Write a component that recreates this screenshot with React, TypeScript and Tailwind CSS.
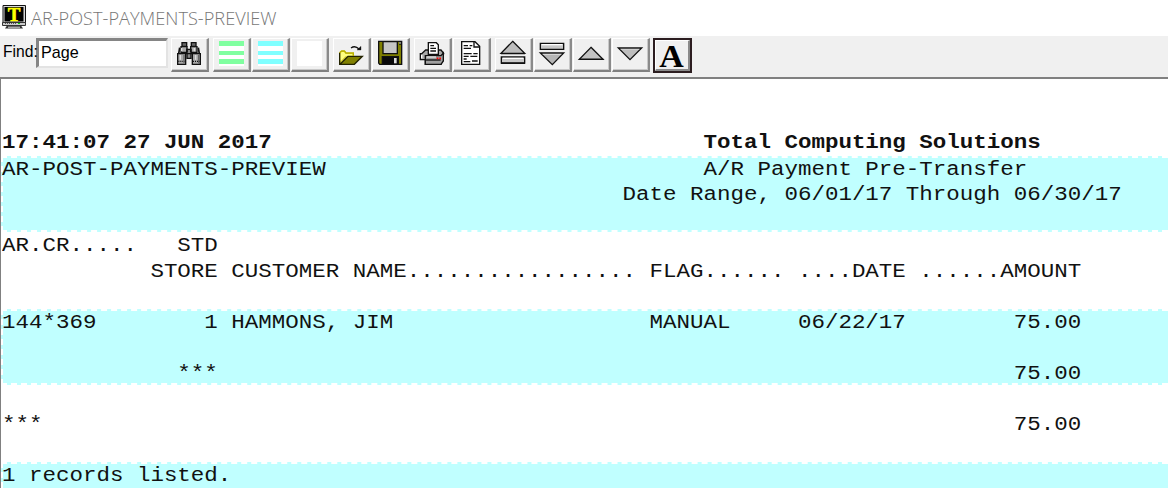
import type { ReactNode } from "react";

function ToolButton({ children, className = "" }: { children?: ReactNode; className?: string }) {
  return (
    <div
      className={`h-[34px] w-[38px] shrink-0 border-t border-l border-r-2 border-b-2 border-t-white border-l-white border-r-[#8a8a8a] border-b-[#808080] bg-[#f0f0f0] shadow-[inset_-1px_-1px_0_#c8c8c8] ${className}`}
    >
      {children}
    </div>
  );
}

/* Icons are drawn on a grid of three units per pixel. */
function Icon({ x, children }: { x: number; children: ReactNode }) {
  return (
    <svg
      className="-mt-px -ml-px block h-[34px] w-[38px]"
      viewBox={`${x} 18 114 102`}
      stroke="#111"
      strokeWidth="4"
      fill="none"
    >
      {children}
    </svg>
  );
}

function Stripes({ color }: { color: string }) {
  return (
    <div className="mt-[2px] ml-[5px] flex h-[25px] w-[25px] flex-col justify-between bg-white pb-[2px]">
      <div className={`h-[5px] ${color}`} />
      <div className={`h-[4px] ${color}`} />
      <div className={`h-[5px] ${color}`} />
    </div>
  );
}

function Toolbar() {
  return (
    <div className="flex h-[41px] items-start bg-[#f0f0f0] pt-[2px] pl-[3px]">
      <div className="mt-[4px] w-[33px] font-['Liberation_Sans'] text-[17px] leading-[20px] whitespace-nowrap text-black">
        <span className="inline-block origin-left scale-x-[0.92]">Find:</span>
      </div>
      <div className="h-[30px] w-[132px] border-t-[3px] border-r-2 border-b-2 border-l-[3px] border-t-[#858585] border-r-[#e3e3e3] border-b-[#e3e3e3] border-l-[#858585] bg-white pl-[2px] font-['Liberation_Sans'] text-[17px] leading-[24px] text-black">
        <span className="inline-block origin-left scale-x-[0.95]">Page</span>
      </div>

      <div className="ml-[3px] flex">
        <ToolButton>
          <Icon x={18}>
            <path d="M51 32h14v11h-14z M79 32h14v11h-14z" fill="#666" strokeWidth="4" />
            <path d="M48 44h18v17h-18z M77 44h19v17h-19z" fill="#aaa" />
            <path d="M44 47l-3 19M100 47l3 19" strokeWidth="5" />
            <path d="M66 52h12v27h-12z" fill="#888" />
            <path d="M38 65h24v32h-24z M82 65h24v32h-24z" fill="#a8a8a8" />
            <path d="M40 88h20M84 88h20" strokeDasharray="3 3" />
            <path d="M50 48v10M46 69v14M92 69v14M88 48v10" stroke="#ddd" />
            <path d="M57 69v25M101 69v25" stroke="#666" />
            <path d="M62 65h20M66 50v10M77 50v10" strokeWidth="4" />
          </Icon>
        </ToolButton>
      </div>

      <div className="ml-[4px] flex gap-px">
        <ToolButton>
          <Stripes color="bg-[#80ffa0]" />
        </ToolButton>
        <ToolButton>
          <Stripes color="bg-[#80ffff]" />
        </ToolButton>
        <ToolButton>
          <div className="mt-[2px] ml-[5px] h-[25px] w-[25px] bg-white" />
        </ToolButton>
      </div>

      <div className="ml-[4px] flex gap-px">
        <ToolButton>
          <Icon x={24}>
            <path d="M44 94V63l5-5h10l4 6h22v11H62z" fill="#ffff80" stroke="#d4cf30" />
            <path d="M44 62v35h44l24-24H69L46 96" fill="#808000" stroke="#222200" />
            <path d="M44 62l6-5h8l5 6h22v8" stroke="#b9b000" />
            <path d="M78 48q12-9 24 3" />
            <path d="M96 54h12v-11z" fill="#111" strokeWidth="1" />
          </Icon>
        </ToolButton>
        <ToolButton>
          <Icon x={141}>
            <path d="M161 28h69v69h-66l-3-4z" fill="#808000" />
            <path d="M174 29h43v36h-43z" fill="#c6c6c6" />
            <path d="M172 74h48v23h-48z" fill="#0a0a0a" />
            <path d="M207 78h8v16h-8z" fill="#ddd" stroke="none" />
            <path d="M222 31h7v7h-7z" fill="#111" stroke="none" />
            <path d="M225 31v4" stroke="#ddd" />
          </Icon>
        </ToolButton>
      </div>

      <div className="ml-[4px] flex gap-px">
        <ToolButton>
          <Icon x={267}>
            <path d="M290 65l12-11h46l8 10-8 33h-47v-14h-15V65z" fill="#aaa" />
            <path d="M310 67V32h24l6 6v29z" fill="#fff" />
            <path d="M316 41h11M316 49h17M316 57h17" />
            <path d="M301 71h47l7-8v24l-7 10h-47z" fill="#a0a0a0" />
            <path d="M303 84h44" />
            <path d="M305 75h28" stroke="#e3e3e3" />
            <path d="M335 79h5M343 79h5" stroke="#f00" strokeWidth="5" />
            <path d="M290 69v10" stroke="#fff" />
          </Icon>
        </ToolButton>
        <ToolButton>
          <Icon x={384}>
            <path d="M410 29h40l14 14v54h-54z" fill="#fff" />
            <path d="M447 29v16h17" />
            <path d="M416 41h13M434 41h8M416 49h22M416 65h24M445 65h13M416 73h15M436 73h21M416 81h9M441 87h17M416 89h20" />
          </Icon>
        </ToolButton>
      </div>

      <div className="ml-[4px] flex gap-px">
        <ToolButton>
          <Icon x={30}>
            <path d="M83 28l36 36H48z" fill="#bdbdbd" />
            <path d="M49 75h70v18H49z" fill="#c8c8c8" />
            <path d="M53 79h62" stroke="#fff" />
            <path d="M48 65h72M48 94h72" />
          </Icon>
        </ToolButton>
        <ToolButton>
          <Icon x={147}>
            <path d="M166 34h70v18h-70z" fill="#c8c8c8" />
            <path d="M170 38h62" stroke="#fff" />
            <path d="M166 63h70l-34 35z" fill="#b5b5b5" />
            <path d="M173 67h56" stroke="#eee" strokeWidth="2" />
          </Icon>
        </ToolButton>
        <ToolButton>
          <Icon x={264}>
            <path d="M318 46l36 36h-71z" fill="#c2c2c2" />
            <path d="M282 82h73" strokeWidth="4" />
          </Icon>
        </ToolButton>
        <ToolButton>
          <Icon x={381}>
            <path d="M400 48h70l-35 35z" fill="#bdbdbd" />
            <path d="M407 52h56" stroke="#ddd" strokeWidth="2" />
          </Icon>
        </ToolButton>
      </div>

      <div className="ml-[3px] flex h-[35px] w-[39px] border-2 border-[#2c1d20] bg-[#f0f0f0]">
        <div className="flex w-full justify-center border-t border-l border-r-2 border-b-2 border-t-white border-l-white border-r-[#8a8a8a] border-b-[#8a8a8a] font-['Liberation_Serif'] text-[32px] leading-[31px] font-bold text-black">
          <span className="inline-block scale-x-[1.06]">A</span>
        </div>
      </div>
    </div>
  );
}

type Line = { text: string; bold?: boolean };

const at = (...parts: [number, string][]) =>
  parts.reduce((line, [column, text]) => line.padEnd(column) + text, "");

const bands: Line[][] = [
  [{ text: "" }, { text: "" }, { text: at([0, "17:41:07 27 JUN 2017"], [52, "Total Computing Solutions"]), bold: true }],
  [
    { text: at([0, "AR-POST-PAYMENTS-PREVIEW"], [52, "A/R Payment Pre-Transfer"]) },
    { text: at([46, "Date Range, 06/01/17 Through 06/30/17"]) },
    { text: "" },
  ],
  [
    { text: at([0, "AR.CR....."], [13, "STD"]) },
    { text: at([11, "STORE CUSTOMER NAME................. FLAG...... ....DATE ......AMOUNT"]) },
    { text: "" },
  ],
  [
    { text: at([0, "144*369"], [15, "1 HAMMONS, JIM"], [48, "MANUAL"], [59, "06/22/17"], [75, "75.00"]) },
    { text: "" },
    { text: at([13, "***"], [75, "75.00"]) },
  ],
  [{ text: "" }, { text: at([0, "***"], [75, "75.00"]) }, { text: "" }],
  [{ text: "1 records listed." }, { text: "" }, { text: "" }],
];

function Report() {
  return (
    <div className="min-h-0 flex-1 overflow-hidden border-t-2 border-l border-[#808080] bg-white">
      {bands.map((lines, i) => (
        <div
          key={i}
          className={`h-[76.5px] ${i % 2 ? "border-y-2 border-l-2 border-dashed border-white bg-[#c0ffff]" : "border-y-2 border-l-2 border-transparent"}`}
        >
          <div className="-mt-px -ml-px">
            {lines.map((line, j) => (
              <pre
                key={j}
                className={`h-[25.5px] w-[1040px] origin-left scale-x-[1.124] font-['Liberation_Mono',monospace] text-[20px] text-[#111] ${line.bold ? "leading-[24px] font-bold" : "leading-[26px]"}`}
              >
                {line.text}
              </pre>
            ))}
          </div>
        </div>
      ))}
    </div>
  );
}

export default function App() {
  return (
    <div className="flex h-[488px] w-[1168px] flex-col overflow-hidden bg-white">
      <div className="flex h-[36px] items-start pt-[5px] pl-[2px]">
        <svg className="h-[25px] w-[25px] shrink-0 overflow-visible" viewBox="0 0 25 25">
          <path d="M1 .5h22.5v19H1z" fill="#d8d8d8" stroke="#111" />
          <path d="M2.5 2h19v14.500h-19z" fill="#000" />
          <path d="M.5 17.500h23v3H.5z" fill="#ccc" stroke="#333" />
          <path d="M3 18.500h11" stroke="#555" strokeDasharray="1 1" />
          <path d="M16 18.500h2" stroke="#0d0" />
          <path d="M5 20.500h14l2 3H3z" fill="#333" />
          <path d="M6 22.200h12" stroke="#ddd" />
          <text
            x="12"
            y="16"
            textAnchor="middle"
            fill="#ff0"
            stroke="#ff0"
            strokeWidth=".5"
            fontFamily="Liberation Serif"
            fontWeight="bold"
            fontSize="19"
          >
            T
          </text>
        </svg>
        <span className="ml-[4px] origin-left scale-x-[1.01] font-['Open_Sans','Noto_Sans',sans-serif] text-[18px] leading-[27px] font-light whitespace-nowrap text-[#777]">
          AR-POST-PAYMENTS-PREVIEW
        </span>
      </div>
      <Toolbar />
      <Report />
    </div>
  );
}
